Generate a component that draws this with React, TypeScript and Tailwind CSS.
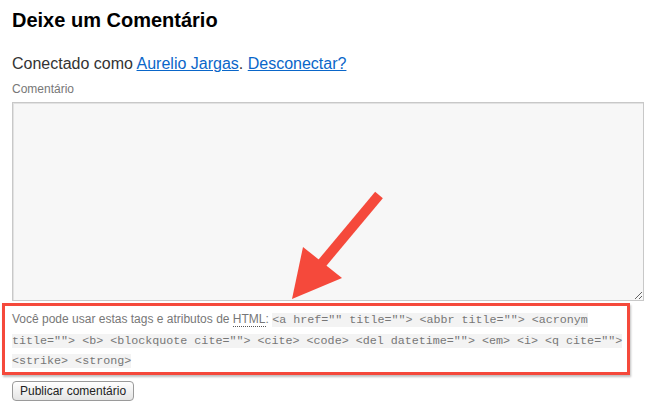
import React from "react";

const allowedTags =
  '<a href="" title=""> <abbr title=""> <acronym title=""> <b> <blockquote cite=""> <cite> <code> <del datetime=""> <em> <i> <q cite=""> <strike> <strong>';

function Arrow() {
  return (
    <svg
      className="pointer-events-none absolute left-0 top-0"
      width="656"
      height="417"
      viewBox="0 0 656 417"
    >
      <line x1="379" y1="195" x2="318" y2="268" stroke="#f5493b" strokeWidth="10" strokeLinecap="butt" />
      <polygon points="292,299 303,247 342,278" fill="#f5493b" />
    </svg>
  );
}

export default function App() {
  return (
    <div className="relative h-[417px] w-[656px] overflow-hidden bg-white px-[12px] pt-[8px] font-['Liberation_Sans',Arial,sans-serif]">
      <h3 className="text-[20px] font-bold leading-[24px] text-black">Deixe um Comentário</h3>
      <p className="mt-[22px] text-[16px] leading-[20px] text-[#333]">
        Conectado como{" "}
        <a className="text-[#0a66c9] underline" href="#">
          Aurelio Jargas
        </a>
        .{" "}
        <a className="text-[#0a66c9] underline" href="#">
          Desconectar?
        </a>
      </p>
      <label className="mt-[7px] block text-[12px] leading-[16px] text-[#777]">Comentário</label>
      <textarea
        className="mt-[5px] block h-[199px] w-[632px] border border-[#c8c8c8] bg-[#f7f7f7] shadow-[inset_1px_1px_0_#e2e2e2] outline-none"
        defaultValue=""
      />
      <p className="mt-[9px] pr-[20px] text-[12px] leading-[19.5px] text-[#777]">
        Você pode usar estas tags e atributos de{" "}
        <abbr className="border-b border-dotted border-[#555] no-underline" title="HyperText Markup Language">
          HTML
        </abbr>
        :{" "}
        <code className="bg-[#f3f3f3] font-['Liberation_Mono','Courier_New',monospace] text-[11.7px] text-[#777]">
          {allowedTags}
        </code>
      </p>
      <button className="mt-[9px] block h-[20px] rounded-[4px] border border-[#9a9a9a] bg-gradient-to-b from-white to-[#e4e4e4] px-[7px] text-[12px] leading-[18px] text-[#222]">
        Publicar comentário
      </button>
      <div className="pointer-events-none absolute left-[2px] top-[303px] h-[72px] w-[628px] border-[3px] border-[#f5493b] shadow-[1px_2px_2px_rgba(0,0,0,0.25)]" />
      <Arrow />
    </div>
  );
}
